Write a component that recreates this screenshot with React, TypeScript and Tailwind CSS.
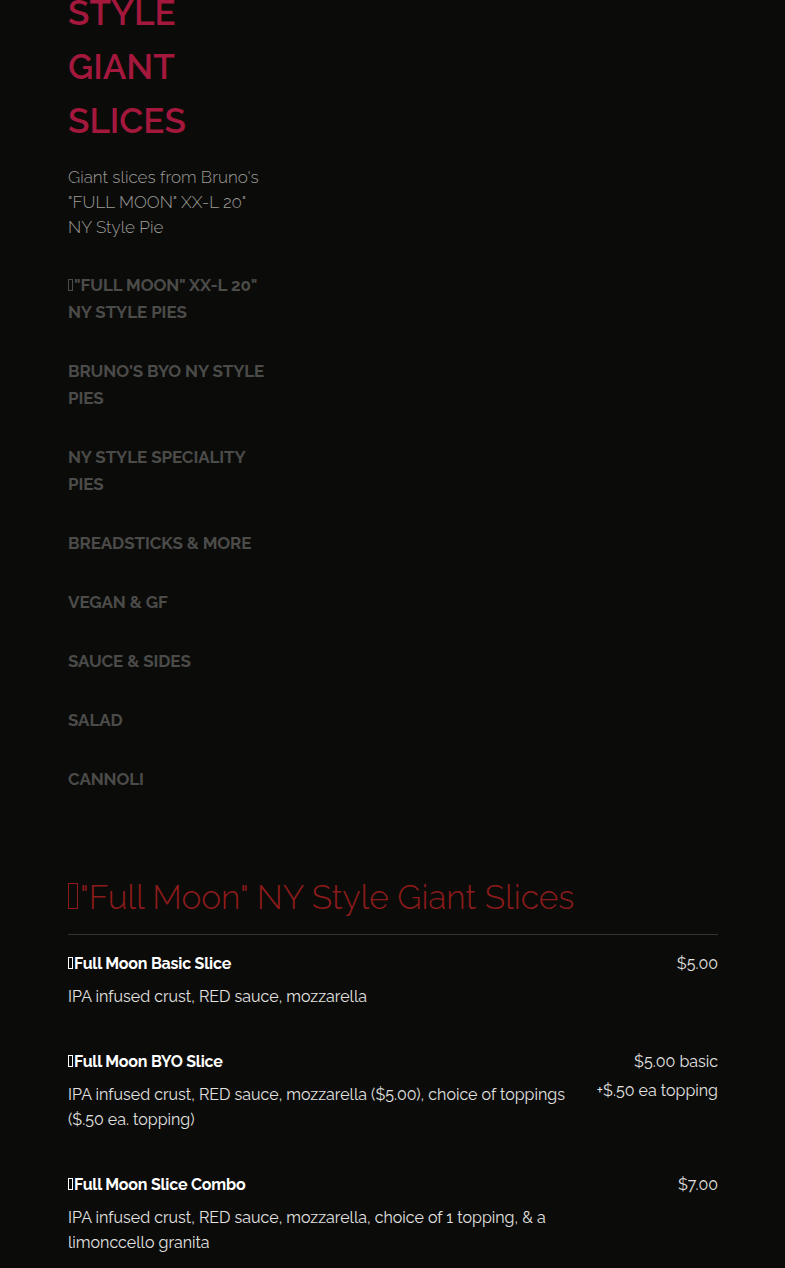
import React from "react";

const Tofu = ({ cls }: { cls: string }) => (
  <span className={`inline-block border border-current align-baseline ${cls}`} />
);

const nav: { label: string; tofu?: boolean }[] = [
  { label: '"FULL MOON" XX-L 20" NY STYLE PIES', tofu: true },
  { label: "BRUNO'S BYO NY STYLE PIES" },
  { label: "NY STYLE SPECIALITY PIES" },
  { label: "BREADSTICKS & MORE" },
  { label: "VEGAN & GF" },
  { label: "SAUCE & SIDES" },
  { label: "SALAD" },
  { label: "CANNOLI" },
];

const items = [
  {
    title: "Full Moon Basic Slice",
    desc: "IPA infused crust, RED sauce, mozzarella",
    prices: ["$5.00"],
  },
  {
    title: "Full Moon BYO Slice",
    desc: "IPA infused crust, RED sauce, mozzarella ($5.00), choice of toppings ($.50 ea. topping)",
    prices: ["$5.00 basic", "+$.50 ea topping"],
  },
  {
    title: "Full Moon Slice Combo",
    desc: "IPA infused crust, RED sauce, mozzarella, choice of 1 topping, & a limonccello granita",
    prices: ["$7.00"],
  },
];

export default function App() {
  return (
    <div className="min-h-screen bg-[#0b0b09] font-['Raleway','Lato',sans-serif] overflow-hidden">
      <div className="pl-[68px] pr-[67px] mt-[-14px] pb-[40px]">
        <div className="w-[200px]">
          <h1 className="text-[35px] leading-[54px] font-semibold text-[#a3183c]">
            STYLE GIANT SLICES
          </h1>
          <p className="mt-[17px] text-[17px] leading-[25px] text-[#9b9b98] font-light">
            Giant slices from Bruno's "FULL MOON" XX-L 20" NY Style Pie
          </p>
          <ul className="mt-[32px] flex flex-col gap-[32px]">
            {nav.map((n) => (
              <li
                key={n.label}
                className="text-[17px] leading-[27px] font-bold text-[#4b4b49] tracking-[-0.1px]"
              >
                {n.tofu && <Tofu cls="w-[5px] h-[12px] mr-[1px]" />}
                {n.label}
              </li>
            ))}
          </ul>
        </div>

        <div className="mt-[83px]">
          <h2 className="text-[33.5px] leading-[44px] font-light text-[#8e1b1b] pb-[14px] border-b border-[#333331]">
            <Tofu cls="w-[10px] h-[26px] mr-[2px]" />
            "Full Moon" NY Style Giant Slices
          </h2>
          <div className="mt-[13.5px] flex flex-col gap-[38px]">
            {items.map((it) => (
              <div key={it.title} className="flex">
                <div className="w-[520px]">
                  <div className="text-[16px] leading-[29px] font-bold text-white tracking-[-0.2px]">
                    <Tofu cls="w-[5px] h-[12px] mr-[1px]" />
                    {it.title}
                  </div>
                  <p className="mt-[6px] text-[16px] leading-[25px] text-[#e2e2e0] font-normal">
                    {it.desc}
                  </p>
                </div>
                <div className="flex-1 text-right text-[16px] leading-[29px] text-[#e2e2e0] font-normal">
                  {it.prices.map((p) => (
                    <div key={p}>{p}</div>
                  ))}
                </div>
              </div>
            ))}
          </div>
        </div>
      </div>
    </div>
  );
}
